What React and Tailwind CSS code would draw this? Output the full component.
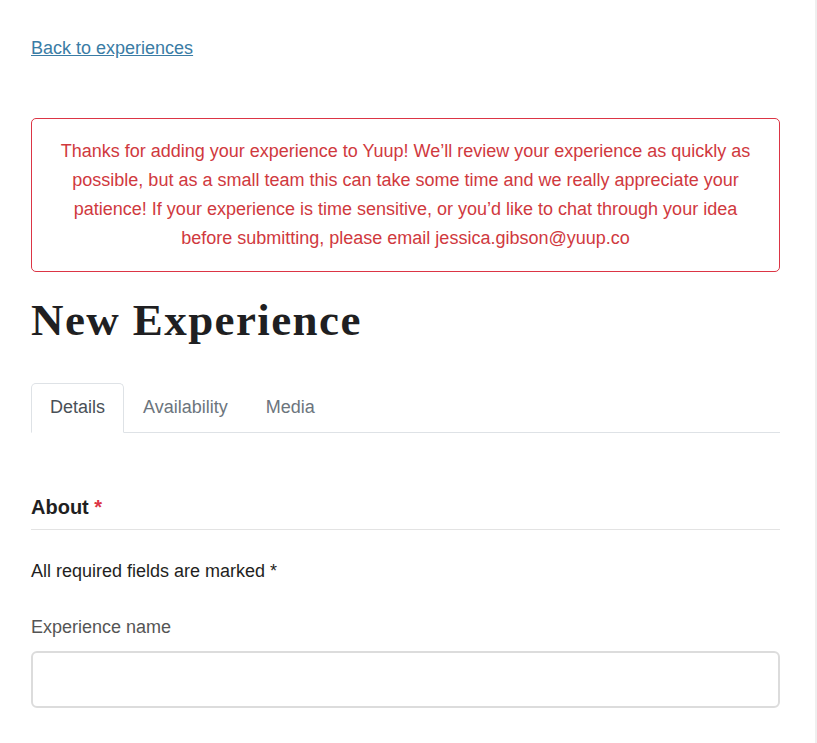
import React, { useState } from 'react';

const tabs = ['Details', 'Availability', 'Media'];

export default function App() {
  const [active, setActive] = useState('Details');
  const [name, setName] = useState('');

  return (
    <div className="flex min-h-[743px] bg-white font-['Liberation_Sans',Arial,sans-serif]">
      <div className="flex-1 pl-[31px] pr-[35px]">
        {/* Back link */}
        <div className="pt-[35px]">
          <a href="#" className="text-[18px] leading-[27px] text-[#3a7ca5] underline">
            Back to experiences
          </a>
        </div>

        {/* Review notice */}
        <div className="mt-[56px] rounded-[5px] border border-[#dc3545] px-[18px] py-[18px] text-center text-[18px] leading-[29px] text-[#d0393e]">
          Thanks for adding your experience to Yuup! We’ll review your experience as quickly as possible,
          but as a small team this can take some time and we really appreciate your patience! If your
          experience is time sensitive, or you’d like to chat through your idea before submitting, please
          email jessica.gibson@yuup.co
        </div>

        <h1 className="mt-[21px] font-['Liberation_Serif',serif] text-[45px] font-bold leading-[54px] tracking-[1.4px] text-[#1f1f22]">
          New Experience
        </h1>

        {/* Tabs */}
        <div className="mt-[36px] flex border-b border-[#dee2e6]">
          {tabs.map((t) => (
            <button
              key={t}
              onClick={() => setActive(t)}
              className={
                t === active
                  ? '-mb-px rounded-t-[5px] border border-[#dee2e6] border-b-white bg-white px-[18px] pt-[10px] pb-[11px] text-[18px] leading-[27px] text-[#495057]'
                  : '-mb-px rounded-t-[5px] border border-transparent px-[18px] pt-[10px] pb-[11px] text-[18px] leading-[27px] text-[#6c757d]'
              }
            >
              {t}
            </button>
          ))}
        </div>

        {/* About section */}
        <div className="mt-[59px] border-b border-[#e3e3e3] pb-[7px]">
          <h2 className="text-[20px] font-bold leading-[30px] text-[#1f1f22]">
            About <span className="text-[#dc3545]">*</span>
          </h2>
        </div>

        <p className="mt-[28px] text-[18px] leading-[27px] text-[#1f1f22]">All required fields are marked *</p>

        <label className="mt-[29px] block text-[18px] leading-[27px] text-[#555]">Experience name</label>
        <input
          value={name}
          onChange={(e) => setName(e.target.value)}
          className="mt-[10px] block h-[57px] w-full rounded-[6px] border-2 border-[#dcdcdc] px-3 text-[18px] outline-none"
        />
      </div>
      <div className="w-[2px] bg-[#efefef]" />
    </div>
  );
}
